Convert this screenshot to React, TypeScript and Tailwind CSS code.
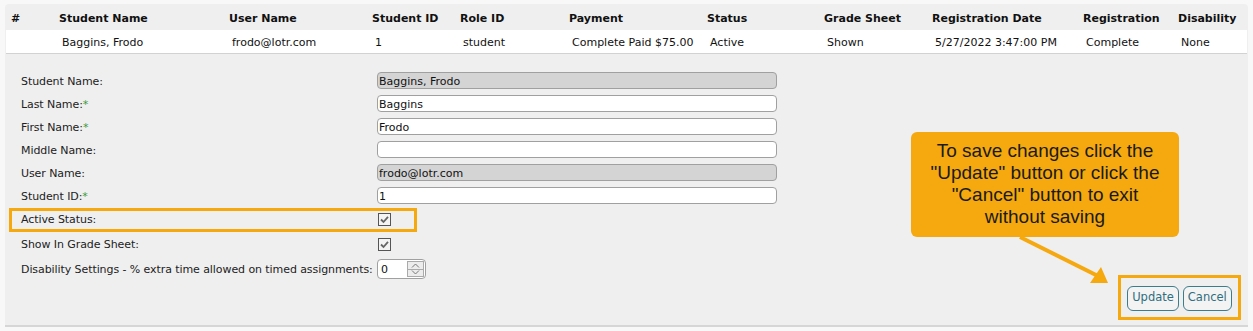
import React from "react"

const headers = ["#", "Student Name", "User Name", "Student ID", "Role ID", "Payment", "Status", "Grade Sheet", "Registration Date", "Registration", "Disability"]
const values = ["", "Baggins, Frodo", "frodo@lotr.com", "1", "student", "Complete Paid $75.00", "Active", "Shown", "5/27/2022 3:47:00 PM", "Complete", "None"]

const gridCols = "grid grid-cols-[48px_170px_143px_88px_109px_138px_117px_108px_151px_95px_64px]"

function TextField({ value, readOnly }: { value: string; readOnly?: boolean }) {
  return (
    <div
      className={`w-[400px] h-[17px] rounded-[4px] border border-[#a0a0a0] px-[1px] pt-[2px] flex items-center leading-none text-[#111] ${
        readOnly ? "bg-[#d4d4d4]" : "bg-white"
      }`}
    >
      {value}
    </div>
  )
}

function Check() {
  return (
    <span className="ml-[1px] w-[13px] h-[13px] border border-[#555] bg-[#f4f4f4] flex items-center justify-center">
      <svg width="9" height="9" viewBox="0 0 9 9">
        <path d="M1 4.5 L3.5 7 L8 1.8" fill="none" stroke="#666" strokeWidth="1.8" />
      </svg>
    </span>
  )
}

function Label({ text, required }: { text: string; required?: boolean }) {
  return (
    <div className="w-[356px] shrink-0 whitespace-nowrap pt-[3px] tracking-[-0.08px] text-[#222]">
      {text}
      {required && <span className="text-[#3a9a3a]">*</span>}
    </div>
  )
}

export default function App() {
  return (
    <div
      className="w-[1253px] h-[331px] bg-[#f8f8f8] pt-[4px] px-[5px] text-[11px] relative overflow-hidden"
      style={{ fontFamily: '"DejaVu Sans", Tahoma, sans-serif' }}
    >
      <div className="bg-[#efefef] rounded-t-[4px] h-[323px] border-b-2 border-[#d6d6d6] flex flex-col">
        {/* table header */}
        <div className={`${gridCols} h-[26px] items-center pl-[6px] pt-[4px] font-bold text-[#111]`}>
          {headers.map((h) => (
            <div key={h} className="whitespace-nowrap">{h}</div>
          ))}
        </div>
        <div className={`${gridCols} h-[24px] items-center pl-[8px] pt-[3px] bg-white mx-[1px] border-b border-[#d2d2d2] text-[#111]`}>
          {values.map((v, i) => (
            <div key={i} className="whitespace-nowrap">{v}</div>
          ))}
        </div>

        {/* form */}
        <div className="flex flex-1 pt-[15px] pl-[16px] pr-[7px] pb-[5px]">
          <div className="flex flex-col">
            <div className="flex items-center h-[23px]">
              <Label text="Student Name:" />
              <TextField value="Baggins, Frodo" readOnly />
            </div>
            <div className="flex items-center h-[23px]">
              <Label text="Last Name:" required />
              <TextField value="Baggins" />
            </div>
            <div className="flex items-center h-[23px]">
              <Label text="First Name:" required />
              <TextField value="Frodo" />
            </div>
            <div className="flex items-center h-[23px]">
              <Label text="Middle Name:" />
              <TextField value="" />
            </div>
            <div className="flex items-center h-[23px]">
              <Label text="User Name:" />
              <TextField value="frodo@lotr.com" readOnly />
            </div>
            <div className="flex items-center h-[23px]">
              <Label text="Student ID:" required />
              <TextField value="1" />
            </div>
            <div className="flex items-center h-[24px] relative">
              <Label text="Active Status:" />
              <Check />
              <div className="absolute -left-[12px] top-[1px] w-[408px] h-[24px] border-[3px] border-[#f5a90f]" />
            </div>
            <div className="flex items-center h-[25px] pt-[1px]">
              <Label text="Show In Grade Sheet:" />
              <Check />
            </div>
            <div className="flex items-center h-[25px] pt-[1px]">
              <Label text="Disability Settings - % extra time allowed on timed assignments:" />
              <div className="w-[49px] h-[20px] shrink-0 rounded-[4px] border border-[#a0a0a0] bg-white flex items-center justify-between pl-[3px] pr-[1px]">
                <span className="text-[#111] pt-[2px]">0</span>
                <div className="flex flex-col w-[17px] h-[16px] border border-[#aaa] bg-[#ececec]">
                  <div className="flex-1 flex items-center justify-center border-b border-[#aaa]">
                    <svg width="9" height="5" viewBox="0 0 9 5"><path d="M1 4.5 L4.5 1 L8 4.5" fill="none" stroke="#777" strokeWidth="1" /></svg>
                  </div>
                  <div className="flex-1 flex items-center justify-center">
                    <svg width="9" height="5" viewBox="0 0 9 5"><path d="M1 0.5 L4.5 4 L8 0.5" fill="none" stroke="#777" strokeWidth="1" /></svg>
                  </div>
                </div>
              </div>
            </div>
          </div>

          <div className="flex-1 flex justify-end items-end">
            <div className="border-[3px] border-[#f5a90f] w-[123px] h-[45px] flex items-center justify-center gap-[4px] pt-[1px]">
              <button className="h-[25px] px-[4px] rounded-[6px] border border-[#3c7d8c] bg-[#f3f3f3] text-[#2f6e80] text-[11.5px]">Update</button>
              <button className="h-[25px] px-[4px] rounded-[6px] border border-[#3c7d8c] bg-[#f3f3f3] text-[#2f6e80] text-[11.5px]">Cancel</button>
            </div>
          </div>
        </div>
      </div>

      {/* callout */}
      <div
        className="absolute left-[911px] top-[132px] w-[268px] h-[105px] rounded-[6px] bg-[#f5a90f] flex items-center justify-center text-center text-[19px] leading-[22px] text-[#1a1a1a] pb-[2px]"
        style={{ fontFamily: '"Liberation Sans", Arial, sans-serif' }}
      >
        <p>
          To save changes click the
          <br />
          "Update" button or click the
          <br />
          "Cancel" button to exit
          <br />
          without saving
        </p>
      </div>
      <svg className="absolute left-[1010px] top-[230px]" width="110" height="60" viewBox="0 0 110 60">
        <path d="M10 7 L88 46" stroke="#f5a90f" strokeWidth="4" />
        <path d="M98 53 L80 53 L91 37 Z" fill="#f5a90f" />
      </svg>
    </div>
  )
}
